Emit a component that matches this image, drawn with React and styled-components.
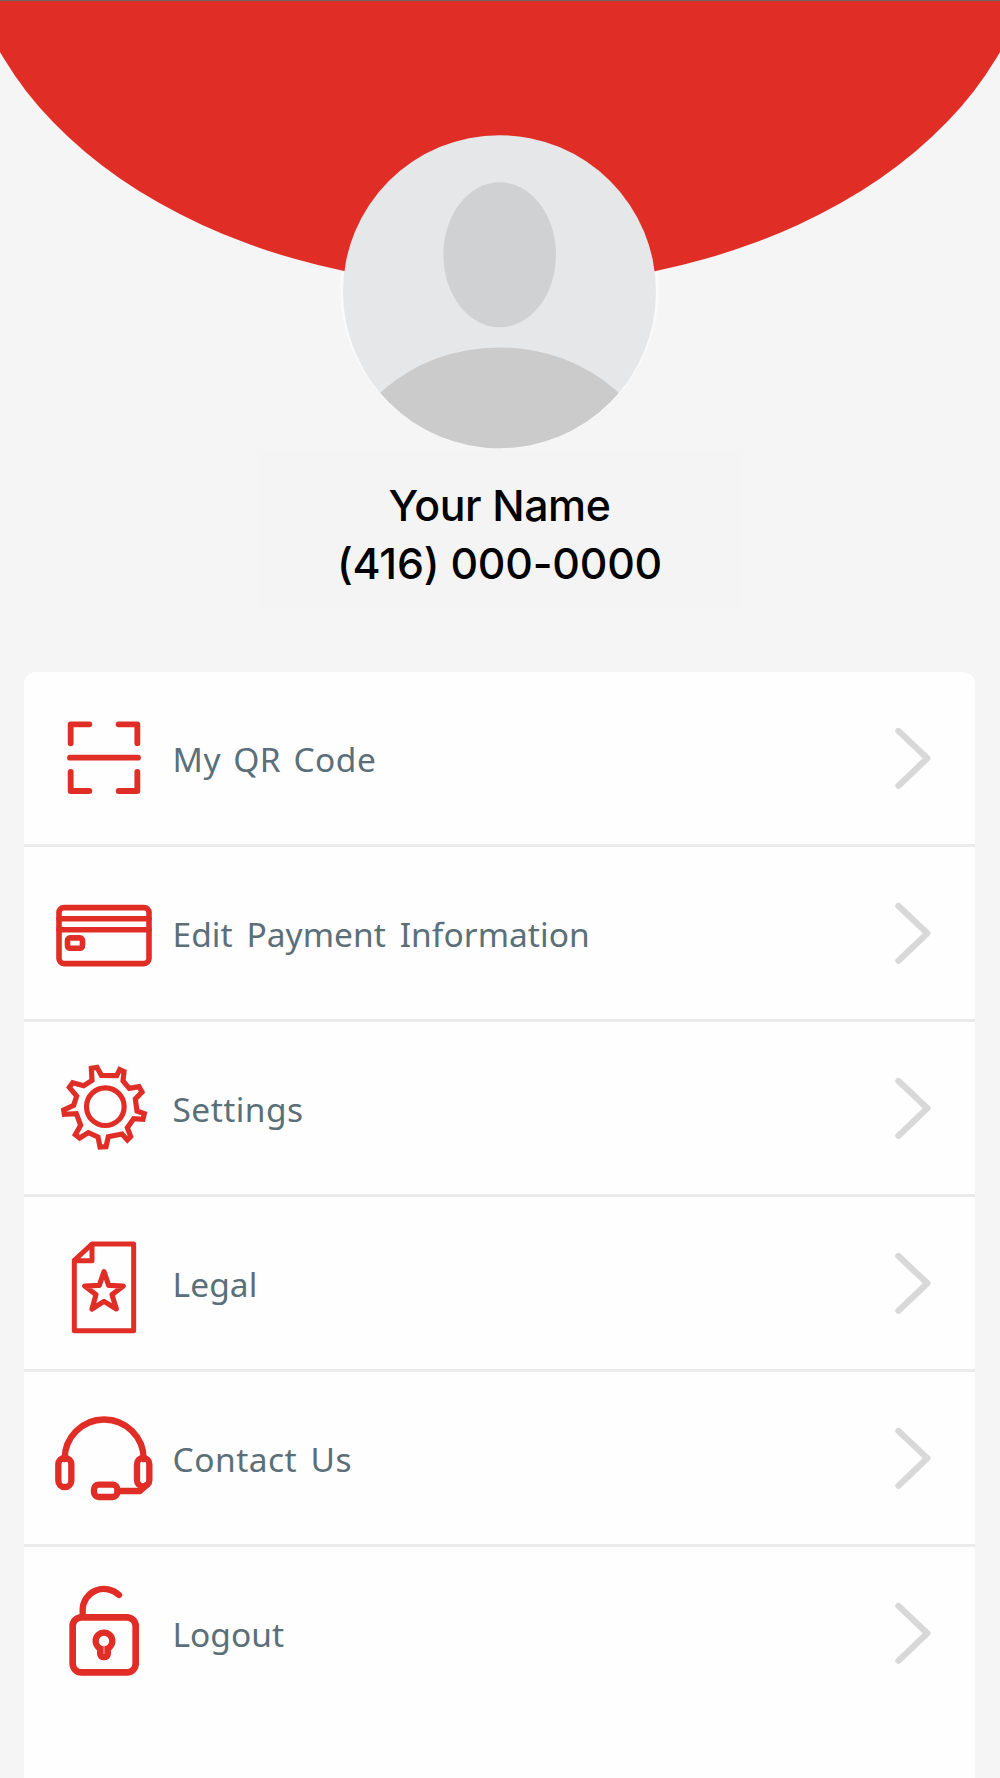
import React from "react";
import styled, { createGlobalStyle } from "styled-components";

const GlobalStyle = createGlobalStyle`
  *, *::before, *::after { box-sizing: border-box; }
  body { margin: 0; background: #f5f5f5; }
`;

const RED = "#e02e27";

const Screen = styled.main`
  display: flex;
  flex-direction: column;
  align-items: center;
  width: 1000px;
  height: 1778px;
  overflow: hidden;
  background: #f5f5f5;
  font-family: "Noto Sans", "Open Sans", sans-serif;
`;

const Banner = styled.header`
  flex: none;
  width: 100%;
  height: 287px;
  border-top: 1px solid #666;
  background: ${RED};
  clip-path: ellipse(537px 370px at 500px -83px);
`;

const Avatar = styled.svg`
  position: relative;
  flex: none;
  display: block;
  width: 324px;
  height: 320px;
  margin-top: -157px;
`;

const Identity = styled.section`
  flex: none;
  display: flex;
  flex-direction: column;
  align-items: center;
  width: 484px;
  height: 158px;
  margin-right: 1px;
  padding-top: 27px;
  background: #f4f4f4;
  color: #000;
  font-family: Inter, "Noto Sans", sans-serif;
  font-size: 42.8px;
  font-weight: 450;
  line-height: 58px;
`;

const IdentityLine = styled.div`
  height: 58px;
  white-space: pre;
  letter-spacing: ${(p) => p.$spacing}px;
`;

const Menu = styled.nav`
  flex: 1;
  width: 951px;
  margin-top: 64px;
  margin-right: 1px;
  border-radius: 12px 12px 0 0;
  background: #fefefe;
`;

const Row = styled.a`
  display: flex;
  align-items: center;
  height: 175px;
  padding: 0 42px 0 23px;
  border-bottom: 3px solid #ebebeb;
  color: #5b6f78;
  &:last-child { border-bottom-color: transparent; }
`;

const Icon = styled.svg`
  flex: none;
  width: 116px;
  height: 116px;
  margin-bottom: 14px;
  fill: none;
  stroke: ${RED};
  stroke-linecap: round;
  stroke-linejoin: round;
`;

const Label = styled.span`
  flex: 1;
  padding: 2px 0 0 9.5px;
  font-size: 33.5px;
  line-height: 44px;
  white-space: nowrap;
  letter-spacing: ${(p) => p.$spacing}px;
  word-spacing: ${(p) => p.$wordSpacing || 0}px;
`;

const Chevron = styled.svg`
  flex: none;
  width: 40px;
  height: 64px;
  fill: none;
  stroke: #d8d8d8;
  stroke-width: 6.3;
  stroke-linecap: round;
  stroke-linejoin: round;
`;

const ScanIcon = () => (
  <Icon viewBox="111 99 348 348" strokeWidth="17.5">
    <path d="M182 250V193H238M326 193H382V250M182 336V393H238M326 393H382V336M180 293H384" />
  </Icon>
);

const CardIcon = () => (
  <Icon viewBox="47 868 116 116" strokeWidth="5.6">
    <rect x="59" y="907.6" width="90" height="56" rx="5" />
    <path d="M59 918.7H149M59 929.8H149" />
    <rect x="67.5" y="937.9" width="15" height="10.4" rx="2.5" />
  </Icon>
);

const GearIcon = () => (
  <Icon viewBox="21 9 348 348" strokeWidth="15.5">
    <path
      strokeLinejoin="miter"
      d="M154 85L171 82L184 106L230 107L239 89L252 95L249 123L268 145L297 140L306 156L286 177L291 213L313 221L309 238L281 236L262 263L272 290L262 300L246 282L205 290L198 320L180 321L174 291L145 278L119 294L106 284L122 256L109 221L73 223L71 210L101 196L110 168L88 142L98 128L131 137L156 121Z"
    />
    <circle cx="196" cy="200" r="56.5" />
  </Icon>
);

const DocumentIcon = () => (
  <Icon viewBox="21 -6 348 348" strokeWidth="15">
    <path d="M156 72H281V332H103V121ZM156 72V122H103" />
    <path d="M192 155L206 196L250 198L216 224L229 267L192 244L156 267L168 224L134 198L178 196Z" strokeWidth="15.5" />
  </Icon>
);

const HeadsetIcon = () => (
  <Icon viewBox="21 -21 348 348" strokeWidth="19">
    <path d="M74 177A118.5 118.5 0 0 1 311 177M241 273H300L318 256" />
    <rect x="55" y="174" width="39" height="87" rx="19" />
    <rect x="291" y="174" width="37" height="85" rx="18" />
    <rect x="162" y="254" width="70" height="37" rx="14" />
  </Icon>
);

const UnlockIcon = () => (
  <Icon viewBox="21 24 348 348" strokeWidth="20">
    <rect x="98" y="172" width="189" height="165" rx="26" />
    <path d="M128 168V149A64 63 0 0 1 237 105" strokeWidth="19" />
    <rect x="171" y="252" width="42" height="49" rx="20" fill={RED} stroke="none" />
    <circle cx="192" cy="243" r="25" strokeWidth="19" fill="#fff" />
    <path d="M192 256V281" strokeWidth="3" stroke="#f3aaa7" />
  </Icon>
);

const items = [
  { label: "My QR Code", icon: ScanIcon, spacing: 0.5, wordSpacing: 3 },
  { label: "Edit Payment Information", icon: CardIcon, spacing: 0.05, wordSpacing: 5 },
  { label: "Settings", icon: GearIcon, spacing: 0.45 },
  { label: "Legal", icon: DocumentIcon, spacing: 0.1 },
  { label: "Contact Us", icon: HeadsetIcon, spacing: 0.5, wordSpacing: 4 },
  { label: "Logout", icon: UnlockIcon, spacing: 0 },
];

export default function App() {
  return (
    <Screen>
      <GlobalStyle />
      <Banner />
      <Avatar viewBox="338 130 324 320">
        <defs>
          <clipPath id="disc">
            <circle cx="499.5" cy="291.7" r="156.5" />
          </clipPath>
          <clipPath id="lower">
            <rect x="338" y="272" width="324" height="180" />
          </clipPath>
        </defs>
        <circle cx="499.5" cy="288.5" r="159.5" fill="#fafafa" clipPath="url(#lower)" />
        <circle cx="499.5" cy="291.7" r="156.5" fill="#e5e7e9" />
        <ellipse cx="499.7" cy="254.7" rx="56.3" ry="72.5" fill="#d0d1d3" />
        <ellipse cx="499.5" cy="494.4" rx="165" ry="147" fill="#cbcbcb" clipPath="url(#disc)" />
      </Avatar>
      <Identity>
        <IdentityLine $spacing={-0.4}>Your Name</IdentityLine>
        <IdentityLine $spacing={-0.2}>(416) 000-0000</IdentityLine>
      </Identity>
      <Menu>
        {items.map(({ label, icon: Glyph, spacing, wordSpacing }) => (
          <Row key={label}>
            <Glyph />
            <Label $spacing={spacing} $wordSpacing={wordSpacing}>{label}</Label>
            <Chevron viewBox="893 726 40 64">
              <path d="M898.5 731L927.3 758.3L898.5 785.7" />
            </Chevron>
          </Row>
        ))}
      </Menu>
    </Screen>
  );
}
